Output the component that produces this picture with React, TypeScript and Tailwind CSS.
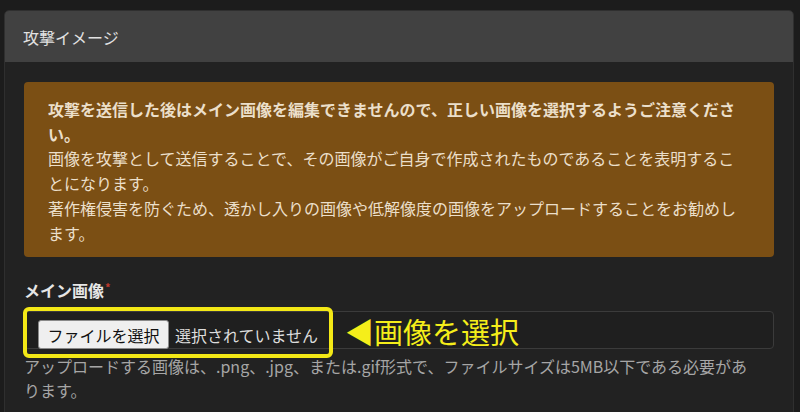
const font = '[font-family:"Noto_Sans_CJK_JP",sans-serif]'

export default function App() {
  return (
    <div className={`h-[412px] w-[800px] overflow-hidden bg-[#1c1c1c] pt-[10px] ${font}`}>
      <div className="ml-[4px] h-[420px] w-[790px] overflow-hidden rounded-t-[5px] border border-[#2f2f2f] bg-[#222222]">
        <div className="flex h-[51px] items-center bg-[#414141] px-[18px] text-[16px] text-[#e2e2e2]">
          攻撃イメージ
        </div>
        <div className="px-[19px] pt-[20px]">
          <div className="rounded-[4px] bg-[#7b4f14] px-[24px] pt-[15px] pb-[12px] text-[16px] leading-[24.7px] text-[#ebdfca]">
            <p className="font-bold">
              攻撃を送信した後はメイン画像を編集できませんので、正しい画像を選択するようご注意ください。
            </p>
            <p>画像を攻撃として送信することで、その画像がご自身で作成されたものであることを表明することになります。</p>
            <p>著作権侵害を防ぐため、透かし入りの画像や低解像度の画像をアップロードすることをお勧めします。</p>
          </div>

          <div className="mt-[21px] flex h-[24px] items-center text-[16px] font-bold text-[#e6e6e6]">
            メイン画像
            <span className="ml-[1px] -mt-[6px] text-[11px] text-[#c0392b]">*</span>
          </div>

          <div className="relative mt-[9px]">
            <div className="flex h-[38px] items-start gap-[6px] rounded-[4px] border border-[#3b3b3b] bg-[#1f1f1f] pl-[13px] pt-[8px]">
              <button className="flex h-[29px] w-[131px] items-center justify-center rounded-[3px] border border-[#8a8a8a] bg-[#efefef] text-[16px] text-[#111]">
                ファイルを選択
              </button>
              <span className="flex h-[29px] items-center text-[16px] text-[#dcdcdc]">選択されていません</span>
            </div>
            <div className="pointer-events-none absolute -left-[1px] -top-[4px] h-[51px] w-[310px] rounded-[6px] border-[4px] border-[#f3e816]" />
            <div className="pointer-events-none absolute left-[321px] top-[4px] text-[29px] leading-[32px] text-[#f5ee1a]">
              ◀画像を選択
            </div>
          </div>

          <p className="mt-[5px] text-[16px] leading-[24px] text-[#a6a6a6]">
            アップロードする画像は、.png、.jpg、または.gif形式で、ファイルサイズは5MB以下である必要があ
            <br />
            ります。
          </p>
        </div>
      </div>
    </div>
  )
}
